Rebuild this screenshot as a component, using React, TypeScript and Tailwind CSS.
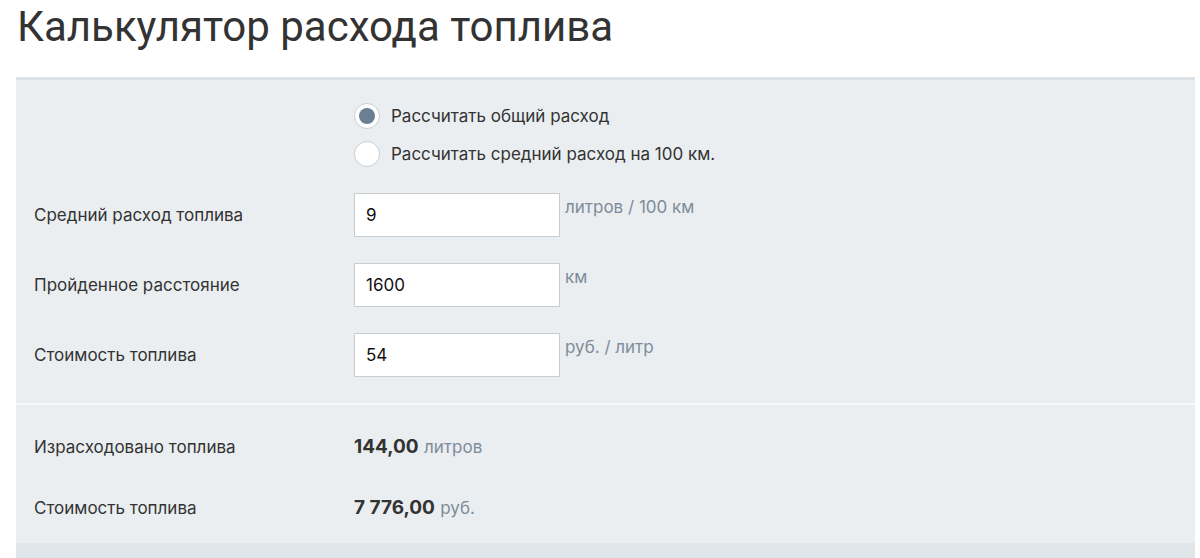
import React from "react";

function Radio({ checked, label }: { checked?: boolean; label: string }) {
  return (
    <div className="flex items-center h-[26px]">
      <span className="w-[26px] h-[26px] rounded-full bg-white border border-[#c9cfd3] flex items-center justify-center shrink-0">
        {checked && <span className="w-[16px] h-[16px] rounded-full bg-[#6b7f92]" />}
      </span>
      <span className="ml-[11px] pt-[2px] text-[17px] text-[#333]">{label}</span>
    </div>
  );
}

function InputRow({ label, value, unit }: { label: string; value: string; unit: string }) {
  return (
    <div className="grid grid-cols-[320px_1fr] h-[44px]">
      <div className="flex items-center pt-[2px] text-[17px] text-[#333]">{label}</div>
      <div className="flex items-start">
        <div className="w-[206px] h-[44px] bg-white border border-[#c8cdd0] flex items-center px-[11px] pt-[2px] text-[17px] text-[#111]">
          {value}
        </div>
        <div className="ml-[5px] mt-[4px] text-[17px] text-[#7d8c9a] leading-[20px]">{unit}</div>
      </div>
    </div>
  );
}

function ResultRow({ label, value, unit }: { label: string; value: string; unit: string }) {
  return (
    <div className="grid grid-cols-[320px_1fr] h-[24px] items-center">
      <div className="text-[17px] text-[#333]">{label}</div>
      <div className="text-[19px]">
        <span className="font-bold text-[#333]">{value}</span>{" "}
        <span className="text-[17px] text-[#7d8c9a]">{unit}</span>
      </div>
    </div>
  );
}

export default function App() {
  return (
    <div
      className="w-full h-[558px] overflow-hidden bg-white"
      style={{ fontFamily: "Inter, 'Noto Sans', sans-serif" }}
    >
      <h1
        className="h-[77px] pl-[17px] pt-[2px] text-[42px] leading-[50px] text-[#333] font-normal"
        style={{ fontFamily: "Roboto, 'Noto Sans', sans-serif" }}
      >
        Калькулятор расхода топлива
      </h1>
      <div className="ml-[16px] mr-[5px] border-t-[3px] border-[#dde3e6] bg-[#eaeef0]">
        <div className="px-[18px]">
          <div className="pt-[23px] pl-[320px] flex flex-col gap-[12px]">
            <Radio checked label="Рассчитать общий расход" />
            <Radio label="Рассчитать средний расход на 100 км." />
          </div>
          <div className="pt-[26px] flex flex-col gap-[26px]">
            <InputRow label="Средний расход топлива" value="9" unit="литров / 100 км" />
            <InputRow label="Пройденное расстояние" value="1600" unit="км" />
            <InputRow label="Стоимость топлива" value="54" unit="руб. / литр" />
          </div>
          <div className="h-[26px]" />
        </div>
        <div className="h-[2px] bg-[#f6f8f9]" />
        <div className="px-[18px] pt-[28px] pb-[25px] flex flex-col gap-[37px]">
          <ResultRow label="Израсходовано топлива" value="144,00" unit="литров" />
          <ResultRow label="Стоимость топлива" value="7 776,00" unit="руб." />
        </div>
        <div className="h-[20px] bg-[#dfe5e8]" />
      </div>
    </div>
  );
}
